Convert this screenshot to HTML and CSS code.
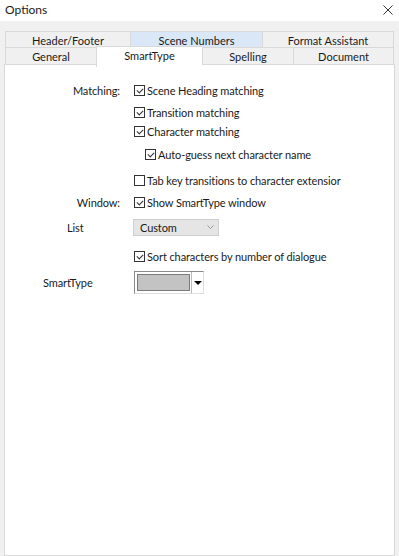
FILE: index.html
```html
<!DOCTYPE html>
<html lang="en">
<head>
    <meta charset="UTF-8">
    <meta name="viewport" content="width=device-width, initial-scale=1.0">
    <title>Options</title>
    <link rel="stylesheet" href="styles.css">
</head>
<body>
    <div class="titlebar">
        <span class="title">Options</span>
        <svg class="close" width="10" height="10" viewBox="0 0 10 10"><path d="M0.5 0.5 L9.5 9.5 M9.5 0.5 L0.5 9.5" stroke="#333" stroke-width="1" fill="none"/></svg>
    </div>

    <div class="dialog">
        <div class="tabs">
            <div class="tab-row">
                <div class="tab tab-header">Header/Footer</div>
                <div class="tab tab-scene hover">Scene Numbers</div>
                <div class="tab tab-format">Format Assistant</div>
            </div>
            <div class="tab-row">
                <div class="tab tab-general">General</div>
                <div class="tab tab-smart active">SmartType</div>
                <div class="tab tab-spelling">Spelling</div>
                <div class="tab tab-document">Document</div>
            </div>
        </div>

        <div class="panel">
            <div class="row r1">
                <span class="label right">Matching:</span>
                <label class="check"><span class="box on"></span>Scene Heading matching</label>
            </div>
            <div class="row r2">
                <span class="label"></span>
                <label class="check"><span class="box on"></span>Transition matching</label>
            </div>
            <div class="row r3">
                <span class="label"></span>
                <label class="check"><span class="box on"></span>Character matching</label>
            </div>
            <div class="row r4">
                <span class="label"></span>
                <label class="check indent"><span class="box on"></span>Auto-guess next character name</label>
            </div>
            <div class="row r5">
                <span class="label"></span>
                <label class="check"><span class="box"></span>Tab key transitions to character extensior</label>
            </div>
            <div class="row r6">
                <span class="label right">Window:</span>
                <label class="check"><span class="box on"></span>Show SmartType window</label>
            </div>
            <div class="row r7">
                <span class="label list-label">List</span>
                <div class="select">
                    <span>Custom</span>
                    <svg class="chev" width="7" height="4" viewBox="0 0 7 4"><polyline points="0.5,0.5 3.5,3.5 6.5,0.5" fill="none" stroke="#999" stroke-width="1"/></svg>
                </div>
            </div>
            <div class="row r8">
                <span class="label"></span>
                <label class="check"><span class="box on"></span>Sort characters by number of dialogue</label>
            </div>
            <div class="row r9">
                <span class="label smart-label">SmartType</span>
                <div class="color-pick">
                    <span class="swatch"></span>
                    <span class="drop"><span class="tri"></span></span>
                </div>
            </div>
        </div>
    </div>
</body>
</html>
```

FILE: styles.css
```css
body {
    margin: 0;
    width: 399px;
    height: 556px;
    overflow: hidden;
    font-family: Lato, "Noto Sans", sans-serif;
    font-size: 11px;
    letter-spacing: -0.1px;
    color: #1a1a1a;
    background-color: #f0f0f0;
}

.titlebar {
    height: 21px;
    box-sizing: border-box;
    background-color: #fff;
    display: flex;
    justify-content: space-between;
    align-items: center;
    padding: 0 6px 2px 5px;
}

.title {
    font-size: 12px;
    letter-spacing: 0;
}

.dialog {
    padding: 10px 4px 0 4px;
    height: 535px;
    box-sizing: border-box;
    display: flex;
    flex-direction: column;
}

.tabs {
    padding: 0 1px 0 1px;
}

.tab-row {
    display: flex;
    height: 17px;
}

.tab {
    text-align: center;
    line-height: 17px;
    background-color: #f0f0f0;
    border: 1px solid #d9d9d9;
    border-right: none;
    box-sizing: border-box;
    letter-spacing: 0;
}

.tab-row .tab:last-child {
    border-right: 1px solid #d9d9d9;
}

.tab-row + .tab-row .tab {
    border-top: none;
    height: 18px;
    border-bottom: none;
}

.tab-header { width: 125px; }
.tab-scene { width: 132px; }
.tab-format { width: 132px; }

.tab-general { width: 91px; }
.tab-smart { width: 106px; }
.tab-spelling { width: 91px; }
.tab-document { width: 101px; }

.tab.hover {
    background-color: #d9e7f7;
}

.tab.active {
    background-color: #fff;
    position: relative;
    margin-top: -2px;
    height: 21px !important;
    line-height: 17px;
    border-top: 1px solid #d9d9d9 !important;
    border-left: 1px solid #d9d9d9;
    z-index: 1;
}

.panel {
    flex: 1;
    background-color: #fff;
    border: 1px solid #d9d9d9;
    margin-top: -1px;
    padding-top: 16px;
}

.row {
    display: flex;
    align-items: center;
    height: 18px;
    margin-top: 4px;
}

.r1 { margin-top: 0; }
.r3 { margin-top: 1px; }
.r4 { margin-top: 5px; }
.r5 { margin-top: 8px; }
.r6 { margin-top: 4px; }
.r7 { margin-top: 7px; }
.r8 { margin-top: 11px; }
.r9 { margin-top: 6px; height: 23px; }

.label {
    width: 126px;
    flex: none;
    box-sizing: border-box;
}

.label.right {
    text-align: right;
    padding-right: 11px;
}

.list-label {
    padding-left: 62px;
}

.smart-label {
    padding-left: 38px;
}

.check {
    display: flex;
    align-items: center;
    padding-left: 3px;
    white-space: nowrap;
}

.check.indent {
    padding-left: 14px;
}

.box {
    width: 11px;
    height: 11px;
    border: 1px solid #333;
    box-sizing: border-box;
    margin-right: 2px;
    position: relative;
    flex: none;
}

.box.on::after {
    content: "";
    position: absolute;
    left: 2px;
    top: 0px;
    width: 5px;
    height: 3px;
    border-left: 1px solid #333;
    border-bottom: 1px solid #333;
    transform: translate(0, 2px) rotate(-45deg);
}

.select {
    width: 86px;
    height: 17px;
    box-sizing: border-box;
    background-color: #e5e5e5;
    border: 1px solid #cfcfcf;
    display: flex;
    align-items: center;
    justify-content: space-between;
    padding: 0 4px 0 6px;
    margin-left: 2px;
}

.color-pick {
    width: 70px;
    height: 23px;
    box-sizing: border-box;
    border: 1px solid #8a8a8a;
    border-right-color: #ddd;
    border-bottom-color: #ddd;
    display: flex;
    margin-left: 3px;
    background-color: #fff;
}

.swatch {
    width: 53px;
    margin: 2px 0 2px 2px;
    background-color: #c3c3c3;
    border: 1px solid #7a7a7a;
    box-sizing: border-box;
}

.drop {
    flex: 1;
    display: flex;
    align-items: center;
    justify-content: center;
    border-left: 1px solid #bbb;
    margin-left: 1px;
}

.tri {
    width: 0;
    height: 0;
    border-left: 4px solid transparent;
    border-right: 4px solid transparent;
    border-top: 4px solid #000;
}
```
